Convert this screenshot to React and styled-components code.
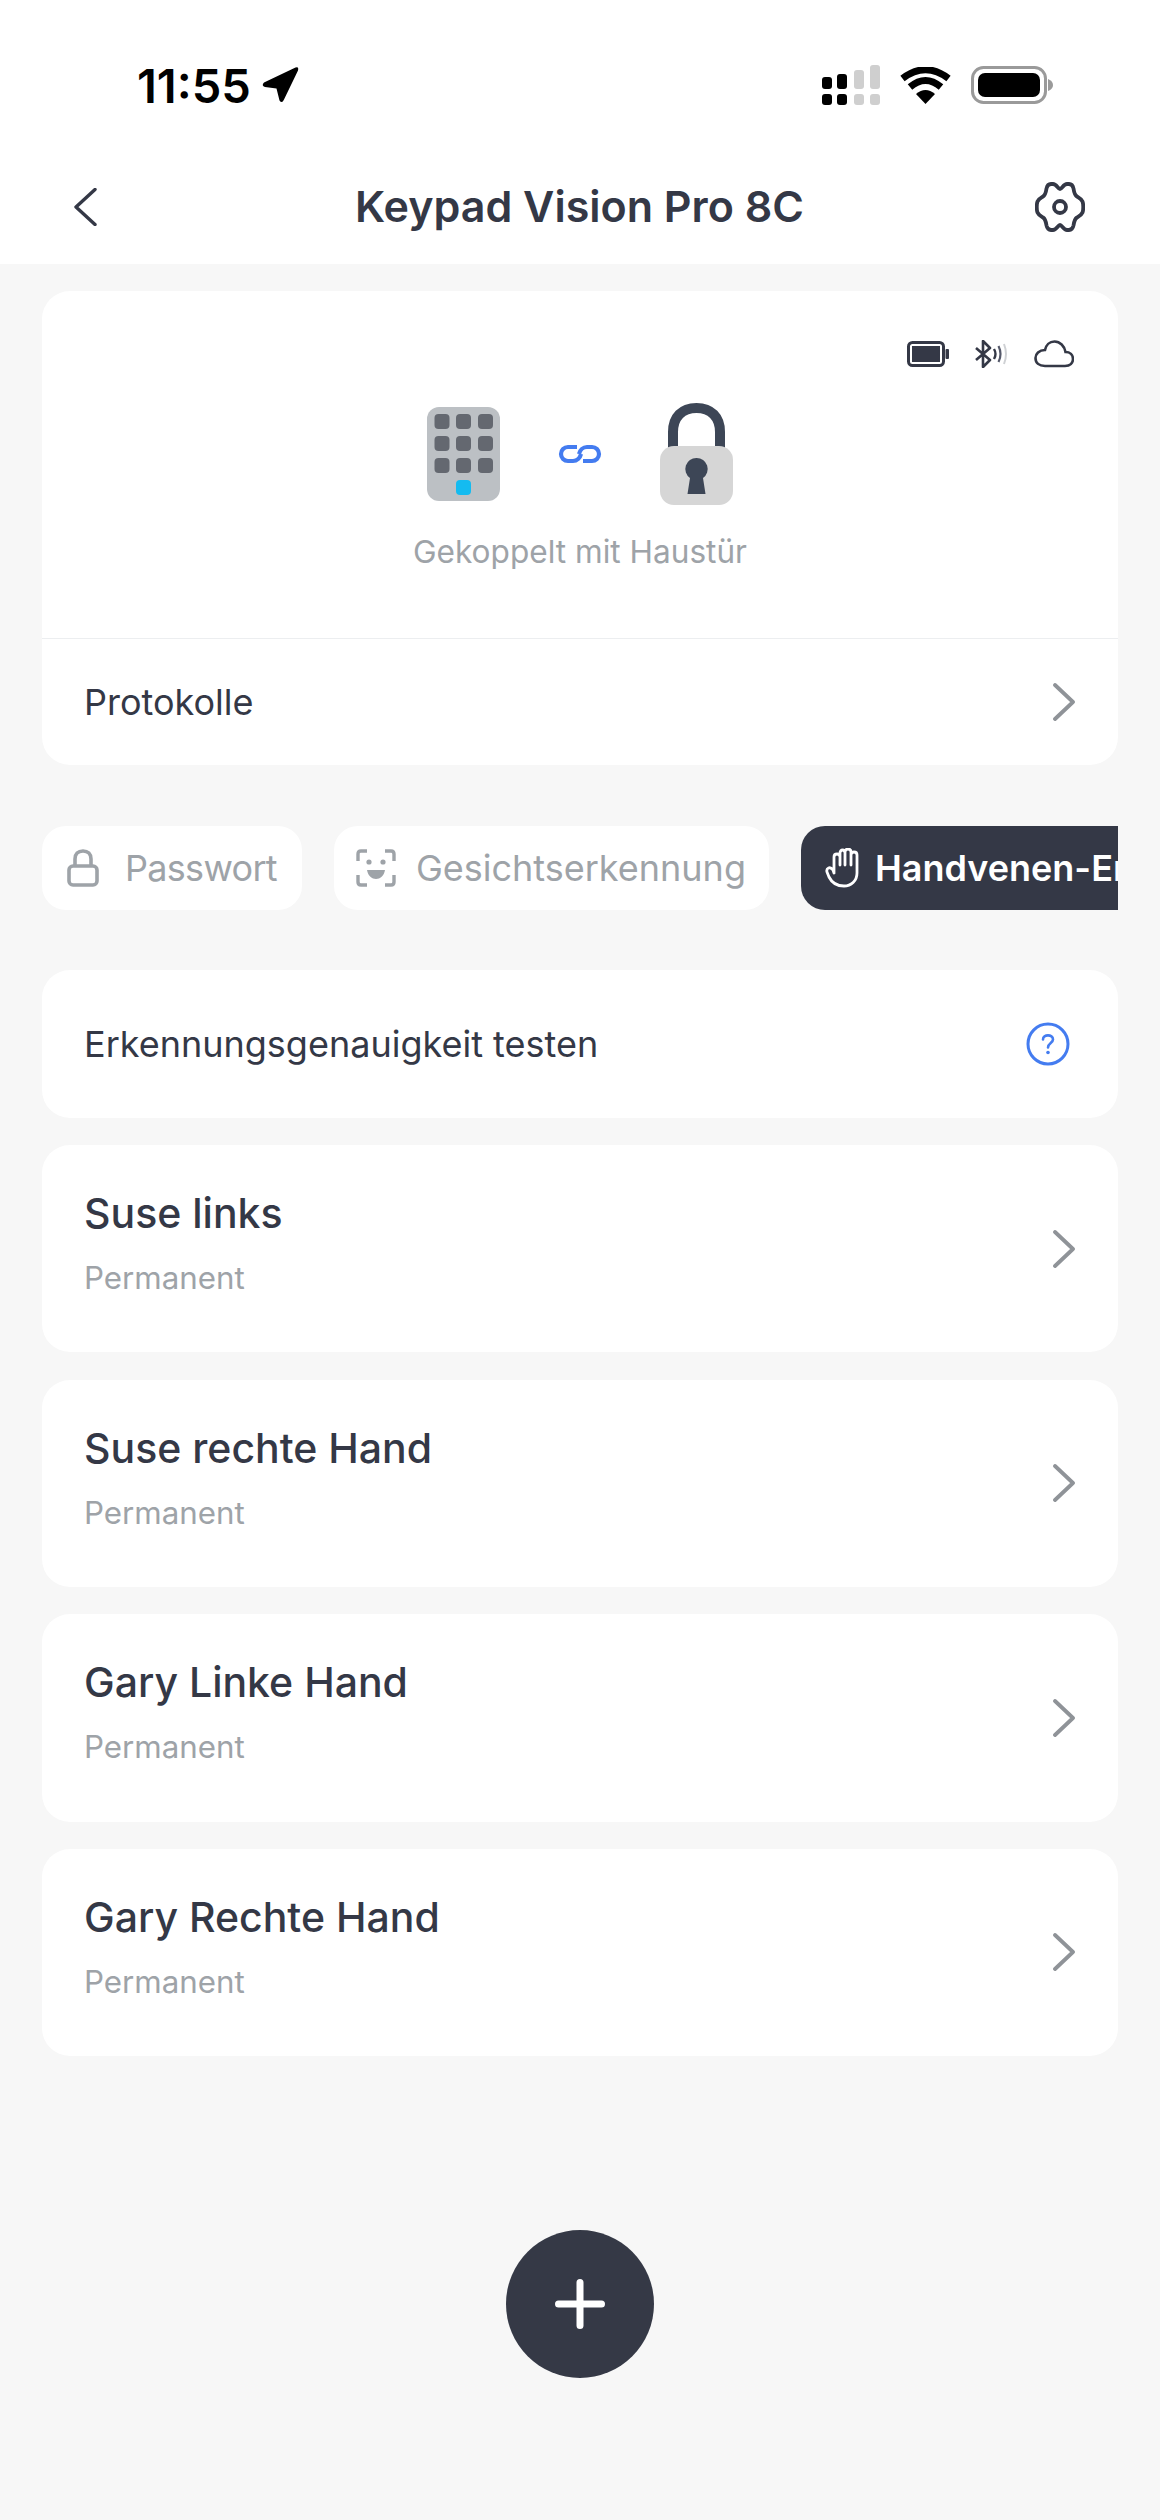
import React from 'react'
import styled, { createGlobalStyle } from 'styled-components'

const GlobalStyle = createGlobalStyle`
  html, body { margin: 0; padding: 0; background: #f7f7f7; }
  * { box-sizing: border-box; }
`

const Page = styled.div`
  width: 1160px;
  height: 2520px;
  overflow: hidden;
  background: #f7f7f7;
  font-family: Inter, "Liberation Sans", sans-serif;
  color: #343846;
`

const Top = styled.header`
  height: 264px;
  background: #fff;
  padding-top: 64px;
`

const StatusBar = styled.div`
  height: 42px;
  display: flex;
  align-items: center;
  justify-content: space-between;
  padding: 0 107px 0 137px;
`

const Time = styled.div`
  display: flex;
  align-items: center;
  gap: 10px;
  font-size: 47px;
  font-weight: 600;
  color: #000;
`

const StatusIcons = styled.div`
  display: flex;
  align-items: center;
  gap: 20px;
`

const NavBar = styled.div`
  margin-top: 72px;
  height: 58px;
  display: grid;
  grid-template-columns: 1fr auto 1fr;
  align-items: center;
  padding: 0 75px 0 74px;
`

const Title = styled.h1`
  margin: 0;
  padding-bottom: 2px;
  font-size: 43px;
  font-weight: 600;
  color: #343846;
`

const BackIcon = styled.svg`
  justify-self: start;
`

const GearIcon = styled.svg`
  justify-self: end;
`

const Body = styled.main`
  padding: 27px 42px 0;
`

const Card = styled.section`
  background: #fff;
  border-radius: 28px;
`

const Pairing = styled.div`
  height: 348px;
  padding: 49px 44px 0 0;
  border-bottom: 1px solid #eceef0;
`

const DeviceState = styled.div`
  display: flex;
  justify-content: flex-end;
  align-items: center;
  gap: 26px;
  height: 28px;
`

const Devices = styled.div`
  margin-left: 44px;
  margin-top: 35px;
  display: flex;
  justify-content: center;
  align-items: center;
  gap: 57px;
`

const Coupled = styled.p`
  margin: 27px 0 0 44px;
  text-align: center;
  font-size: 31.6px;
  color: #9ea3a8;
`

const Row = styled.div`
  height: ${p => p.$h}px;
  padding: 0 42px;
  display: flex;
  align-items: center;
  justify-content: space-between;
  font-size: 36px;
  color: #343846;
`

const Tabs = styled.div`
  margin-top: 61px;
  display: flex;
  gap: 32px;
  overflow: hidden;
`

const Tab = styled.div`
  flex: none;
  height: 84px;
  display: flex;
  align-items: center;
  gap: ${p => p.$gap}px;
  padding: 0 ${p => p.$right}px 0 ${p => p.$left}px;
  border-radius: 24px;
  background: ${p => (p.$active ? '#343846' : '#fff')};
  color: ${p => (p.$active ? '#fff' : '#9ea3a8')};
  font-size: 36px;
  font-weight: ${p => (p.$active ? 600 : 400)};
  letter-spacing: ${p => p.$tracking || 0}px;
  white-space: nowrap;
`

const TestCard = styled(Card)`
  margin-top: 60px;
`

const HelpIcon = styled.svg`
  margin-right: 6px;
`

const List = styled.div`
  margin-top: 27px;
  display: flex;
  flex-direction: column;
  gap: 27.2px;
`

const Person = styled(Card)`
  height: 207.4px;
  padding: 0 42px;
  display: flex;
  align-items: center;
  justify-content: space-between;
`

const PersonText = styled.div`
  margin-bottom: 12px;
`

const Name = styled.div`
  font-size: 41px;
  font-weight: 500;
  color: #343846;
`

const Validity = styled.div`
  margin-top: 21px;
  font-size: 31.300px;
  color: #9ea3a8;
`

const Fab = styled.button`
  display: flex;
  margin: 174px auto 0;
  width: 148px;
  height: 148px;
  padding: 0;
  border: 0;
  border-radius: 50%;
  background: #353946;
  align-items: center;
  justify-content: center;
`

const Arrow = () => (
  <svg width="38" height="38" viewBox="0 0 38 38">
    <path d="M34.500 1.500 L3 16.500 Q0 19.500 4 21 L15.500 22.500 L18.500 34.500 Q21 38 23 33.500 L37 4.500 Q38 0 34.500 1.500 Z" fill="#000" />
  </svg>
)

const Signal = () => (
  <svg width="58" height="40" viewBox="0 0 58 40">
    <g fill="#000">
      <rect x="0" y="29" width="10" height="11" rx="3" />
      <rect x="15" y="29" width="10" height="11" rx="3" />
      <rect x="0" y="12" width="10" height="12" rx="3" />
      <rect x="15" y="9" width="10" height="15" rx="3" />
    </g>
    <g fill="#cfcfcf">
      <rect x="32" y="29" width="10" height="11" rx="3" />
      <rect x="48" y="29" width="10" height="11" rx="3" />
      <rect x="32" y="5" width="10" height="19" rx="3" />
      <rect x="48" y="0" width="10" height="24" rx="3" />
    </g>
  </svg>
)

const Wifi = () => (
  <svg width="51" height="37" viewBox="0 0 51 37">
    <path d="M25.500 37 L16 27 Q25.500 19 35 27 Z" fill="#000" />
    <path d="M10 20 Q25.500 7 41 20" fill="none" stroke="#000" strokeWidth="7" />
    <path d="M2.500 11.500 Q25.500 -6 48.500 11.500" fill="none" stroke="#000" strokeWidth="7" />
  </svg>
)

const PhoneBattery = () => (
  <svg width="82" height="38" viewBox="0 0 82 38">
    <rect x="1.500" y="1.500" width="73" height="35" rx="11" fill="none" stroke="#9a9a9a" strokeWidth="3" />
    <rect x="7" y="7" width="62" height="24" rx="7" fill="#000" />
    <path d="M77 13 Q82 15 82 19 Q82 23 77 25 Z" fill="#9a9a9a" />
  </svg>
)

const Back = () => (
  <BackIcon width="23" height="38" viewBox="0 0 23 38">
    <path d="M21 1.500 L2 19 L21 36.500" fill="none" stroke="#343846" strokeWidth="3.400" strokeLinecap="round" strokeLinejoin="round" />
  </BackIcon>
)

const Gear = () => (
  <GearIcon width="50" height="50" viewBox="0 0 50 50">
    <path
      d="M25 7 C27 7 28.500 2 32 2 H34 C37 2 38 4 38.500 6.500 C39 10 39.500 13 42 14.500 C44.500 16 46.500 17 47.500 19.500 C48.500 22 48.500 28 47.500 30.500 C46.500 33 44.500 34 42 35.500 C39.500 37 39 40 38.500 43.500 C38 46 37 48 34 48 H32 C28.500 48 27 43 25 43 C23 43 21.500 48 18 48 H16 C13 48 12 46 11.500 43.500 C11 40 10.500 37 8 35.500 C5.500 34 3.500 33 2.500 30.500 C1.500 28 1.500 22 2.500 19.500 C3.500 17 5.500 16 8 14.500 C10.500 13 11 10 11.500 6.500 C12 4 13 2 16 2 H18 C21.500 2 23 7 25 7 Z"
      fill="none"
      stroke="#343846"
      strokeWidth="3.800"
      strokeLinejoin="round"
    />
    <circle cx="25" cy="25" r="6" fill="none" stroke="#343846" strokeWidth="3.800" />
  </GearIcon>
)

const Chevron = () => (
  <svg width="24" height="38" viewBox="0 0 24 38">
    <path d="M3 2 L21 19 L3 36" fill="none" stroke="#8f9398" strokeWidth="3.800" strokeLinecap="round" strokeLinejoin="round" />
  </svg>
)

const MiniBattery = () => (
  <svg width="42" height="26" viewBox="0 0 42 26">
    <rect x="1.500" y="1.500" width="35" height="23" rx="4" fill="none" stroke="#343846" strokeWidth="3" />
    <rect x="5" y="5" width="28" height="16" fill="#343846" />
    <rect x="38.500" y="8" width="3.500" height="10" rx="1" fill="#343846" />
  </svg>
)

const Bluetooth = () => (
  <svg width="33" height="28" viewBox="0 0 33 28">
    <path d="M1 8 L15 20 L8 27 L8 1 L15 8 L1 20" fill="none" stroke="#343846" strokeWidth="2.600" strokeLinejoin="round" />
    <path d="M19 9 Q22 14 19 19" fill="none" stroke="#343846" strokeWidth="2.400" />
    <path d="M23.500 6 Q27.500 14 23.500 22" fill="none" stroke="#55596a" strokeWidth="2.200" />
    <path d="M29 4 Q33 14 29 24" fill="none" stroke="#cfd1d4" strokeWidth="2" />
  </svg>
)

const Cloud = () => (
  <svg width="40" height="28" viewBox="0 0 40 28">
    <path d="M11 26 H31 C36 26 39 23 39 19 C39 15 36 12 31.500 12 C30.500 6 26 1.500 20.500 1.500 C15.500 1.500 12 5 11 10 C5 10 1.500 14 1.500 18 C1.500 23 5 26 11 26 Z" fill="none" stroke="#343846" strokeWidth="2.600" />
  </svg>
)

const Keypad = () => (
  <svg width="73" height="94" viewBox="0 0 73 94">
    <rect width="73" height="94" rx="12" fill="#bcc0c4" />
    {[7.5, 29, 51].map(x => [7, 29, 51].map(y => (
      <rect key={`${x}-${y}`} x={x} y={y} width="15" height="15" rx="4" fill="#646870" />
    )))}
    <rect x="29" y="73" width="15" height="15" rx="4" fill="#14bbf0" />
  </svg>
)

const LinkIcon = () => (
  <svg width="46" height="20" viewBox="0 0 46 20">
    <g fill="none" stroke="#447cf0" strokeWidth="4.200">
      <path d="M20 3 H11 A7 7 0 0 0 11 17 H16 C20 17 23 14 24 10" />
      <path d="M26 17 H35 A7 7 0 0 0 35 3 H30 C26 3 23 6 22 10" />
    </g>
  </svg>
)

const BigLock = () => (
  <svg width="73" height="102" viewBox="0 0 73 102">
    <path d="M13 50 V29 C13 14 22 5 36.500 5 C51 5 60 14 60 29 V50" fill="none" stroke="#3d4656" strokeWidth="10" />
    <rect y="43" width="73" height="59" rx="14" fill="#d6d6d6" />
    <path d="M36.500 55 A11 11 0 0 1 43 75 L45.500 91 H27.500 L30 75 A11 11 0 0 1 36.500 55 Z" fill="#3d4656" />
  </svg>
)

const TabLock = () => (
  <svg width="32" height="38" viewBox="0 0 32 38">
    <path d="M8 17 V10 C8 5 11 2 16 2 C21 2 24 5 24 10 V17" fill="none" stroke="#9ea3a8" strokeWidth="3.600" />
    <rect x="2" y="17" width="28" height="19" rx="4" fill="none" stroke="#9ea3a8" strokeWidth="3.600" />
  </svg>
)

const TabFace = () => (
  <svg width="40" height="38" viewBox="0 0 40 38">
    <g fill="none" stroke="#9ea3a8" strokeWidth="3.400">
      <path d="M2 12 V5 Q2 2 5 2 H11" />
      <path d="M29 2 H35 Q38 2 38 5 V12" />
      <path d="M2 26 V33 Q2 36 5 36 H11" />
      <path d="M29 36 H35 Q38 36 38 33 V26" />
    </g>
    <circle cx="13" cy="13" r="2.600" fill="#9ea3a8" />
    <circle cx="27" cy="13" r="2.600" fill="#9ea3a8" />
    <path d="M11 21 H29 C28 27 24 30 20 30 C16 30 12 27 11 21 Z" fill="#9ea3a8" />
  </svg>
)

const TabHand = () => (
  <svg width="38" height="40" viewBox="0 0 38 40">
    <path
      d="M9 25 V9 M15 17 V5 C15 1 20 1 20 5 V17 M20 17 V4 C20 0 26 0 26 4 V17 M26 17 V7 C26 3 32 3 32 7 V25 C32 33 26 38 19 38 C12 38 7 35 4 29 L2 24 C1 20 5 18 8 22 L9 25 M9 20 V9 C9 5 15 5 15 9"
      fill="none"
      stroke="#fff"
      strokeWidth="2.800"
      strokeLinecap="round"
      strokeLinejoin="round"
    />
  </svg>
)

const Help = () => (
  <HelpIcon width="44" height="44" viewBox="0 0 44 44">
    <circle cx="22" cy="22" r="20" fill="none" stroke="#447cf0" strokeWidth="3" />
    <path d="M17 17.500 C17 12 27 12 27 17.500 C27 21 22 21 22 25.500" fill="none" stroke="#447cf0" strokeWidth="2.600" strokeLinecap="round" />
    <circle cx="22" cy="30.500" r="1.800" fill="#447cf0" />
  </HelpIcon>
)

const Plus = () => (
  <svg width="50" height="50" viewBox="0 0 50 50">
    <path d="M25 3.500 V46.500 M3.500 25 H46.500" stroke="#fff" strokeWidth="7" strokeLinecap="round" />
  </svg>
)

const people = ['Suse links', 'Suse rechte Hand', 'Gary Linke Hand', 'Gary Rechte Hand']

export default function App() {
  return (
    <Page>
      <GlobalStyle />
      <Top>
        <StatusBar>
          <Time>11:55<Arrow /></Time>
          <StatusIcons>
            <Signal />
            <Wifi />
            <PhoneBattery />
          </StatusIcons>
        </StatusBar>
        <NavBar>
          <Back />
          <Title>Keypad Vision Pro 8C</Title>
          <Gear />
        </NavBar>
      </Top>
      <Body>
        <Card>
          <Pairing>
            <DeviceState>
              <MiniBattery />
              <Bluetooth />
              <Cloud />
            </DeviceState>
            <Devices>
              <Keypad />
              <LinkIcon />
              <BigLock />
            </Devices>
            <Coupled>Gekoppelt mit Haustür</Coupled>
          </Pairing>
          <Row $h={126}>Protokolle<Chevron /></Row>
        </Card>
        <Tabs>
          <Tab $left={25} $right={25} $gap={26} $tracking={-0.7}><TabLock />Passwort</Tab>
          <Tab $left={22} $right={23} $gap={20}><TabFace />Gesichtserkennung</Tab>
          <Tab $left={24} $right={24} $gap={12} $active><TabHand />Handvenen-Erkennung</Tab>
        </Tabs>
        <TestCard>
          <Row $h={148}>Erkennungsgenauigkeit testen<Help /></Row>
        </TestCard>
        <List>
          {people.map(name => (
            <Person key={name}>
              <PersonText>
                <Name>{name}</Name>
                <Validity>Permanent</Validity>
              </PersonText>
              <Chevron />
            </Person>
          ))}
        </List>
        <Fab aria-label="Hinzufügen"><Plus /></Fab>
      </Body>
    </Page>
  )
}
